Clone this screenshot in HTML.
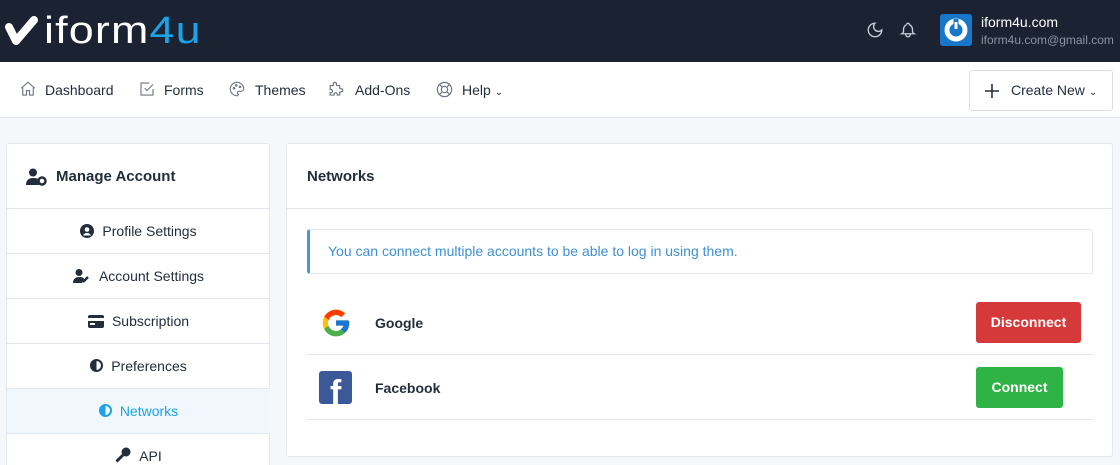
<!DOCTYPE html><html><head><style>
*{box-sizing:border-box;margin:0;padding:0}
html,body{width:1120px;height:465px;overflow:hidden}
body{background:#f5f7fb;font-family:"Liberation Sans",sans-serif;position:relative;color:#232e3c}
.top{position:absolute;left:0;top:0;width:1120px;height:62px;background:#1b2333}
.nav{position:absolute;left:0;top:62px;width:1120px;height:56px;background:#fff;border-bottom:1px solid #e3e6ec}
.ni{position:absolute;top:0;line-height:56px;font-size:14px;color:#232e3c}
.ni svg{position:absolute;left:0;top:18px}
.card{position:absolute;background:#fff;border:1px solid #e3e6ec;border-radius:3px}
.item{position:absolute;left:0;width:263px;height:45px;border-top:1px solid #e3e6ec;font-size:14px;text-align:center;line-height:44px}
.ic{display:inline-block;vertical-align:-2px;margin-right:8px}
.btn{position:absolute;color:#fff;font-size:14px;font-weight:bold;text-align:center;line-height:40px;border-radius:3px}
</style></head><body>
<div class="top">
<svg style="position:absolute;left:4px;top:14px" width="36" height="32"><path d="M5 13 L12 27 L30 6" stroke="#fff" stroke-width="8" fill="none" stroke-linecap="round" stroke-linejoin="round"/></svg>
<div style="position:absolute;left:44px;top:9px;font-size:38px;color:#fff;letter-spacing:1px;line-height:44px;transform:scaleX(1.18);transform-origin:left">iform<span style="color:#1aa3e8">4u</span></div>
<svg style="position:absolute;left:866px;top:21px" width="18" height="18" viewBox="0 0 24 24"><path d="M12 3a6 6 0 0 0 9 9 9 9 0 1 1-9-9z" stroke="#c9ced6" stroke-width="1.8" fill="none"/></svg>
<svg style="position:absolute;left:899px;top:21px" width="18" height="18" viewBox="0 0 24 24"><path d="M10 5a2 2 0 0 1 4 0a7 7 0 0 1 4 6v3a4 4 0 0 0 2 3H4a4 4 0 0 0 2-3v-3a7 7 0 0 1 4-6M9 17v1a3 3 0 0 0 6 0v-1" stroke="#c9ced6" stroke-width="1.8" fill="none"/></svg>
<div style="position:absolute;left:940px;top:14px;width:32px;height:32px;background:#1877c9;border-radius:3px"><svg width="32" height="32"><circle cx="16" cy="16" r="9" stroke="#fff" stroke-width="5" fill="none"/><path d="M16 5v10" stroke="#1877c9" stroke-width="5"/><path d="M16 8v7" stroke="#fff" stroke-width="3"/></svg></div>
<div style="position:absolute;left:981px;top:14px;font-size:14px;color:#fff">iform4u.com</div>
<div style="position:absolute;left:981px;top:33px;font-size:12px;color:#8a94a6">iform4u.com@gmail.com</div>
</div>
<div class="nav">
<div class="ni" style="left:19px;padding-left:26px"><svg width="18" height="18" viewBox="0 0 24 24" fill="none" stroke="#6e7582" stroke-width="1.5"><path d="M3 11l9-8 9 8M5 10v10h5v-6h4v6h5V10"/></svg>Dashboard</div>
<div class="ni" style="left:138px;padding-left:26px"><svg width="18" height="18" viewBox="0 0 24 24" fill="none" stroke="#6e7582" stroke-width="1.5"><path d="M9 11l3 3 8-8M20 12v8H4V4h11"/></svg>Forms</div>
<div class="ni" style="left:228px;padding-left:27px"><svg width="18" height="18" viewBox="0 0 24 24" fill="none" stroke="#6e7582" stroke-width="1.5"><path d="M12 21a9 9 0 1 1 9-9c0 2-2 3-4 3h-2a2 2 0 0 0-1 4c0 1-1 2-2 2z"/><circle cx="8" cy="11" r="1"/><circle cx="11" cy="7" r="1"/><circle cx="16" cy="9" r="1"/></svg>Themes</div>
<div class="ni" style="left:327px;padding-left:28px"><svg width="19" height="19" viewBox="0 0 24 24" fill="none" stroke="#6e7582" stroke-width="1.5"><path d="M4 7h3a1 1 0 0 0 1-1V5a2 2 0 0 1 4 0v1a1 1 0 0 0 1 1h3v3a1 1 0 0 0 1 1h1a2 2 0 0 1 0 4h-1a1 1 0 0 0-1 1v3h-3v-1a2 2 0 0 0-4 0v1H4v-3h1a2 2 0 0 0 0-4H4z"/></svg>Add-Ons</div>
<div class="ni" style="left:435px;padding-left:27px"><svg width="19" height="19" viewBox="0 0 24 24" fill="none" stroke="#6e7582" stroke-width="1.5"><circle cx="12" cy="12" r="9"/><circle cx="12" cy="12" r="4"/><path d="M15 15l3.5 3.5M9 15l-3.5 3.5M15 9l3.5-3.5M9 9L5.5 5.5"/></svg>Help <span style="font-size:10px">⌄</span></div>
<div style="position:absolute;left:969px;top:8px;width:144px;height:41px;border:1px solid #dadfe5;border-radius:3px;font-size:14px;line-height:39px;padding-left:41px">Create New <span style="font-size:10px">⌄</span><svg style="position:absolute;left:15px;top:13px" width="14" height="14"><path d="M7 0v14M0 7h14" stroke="#232e3c" stroke-width="1.6"/></svg></div>
</div>
<div class="card" style="left:6px;top:143px;width:264px;height:340px">
<div style="position:absolute;left:19px;top:24px;font-size:15px;font-weight:bold;padding-left:30px">
<svg style="position:absolute;left:0;top:0" width="22" height="18" viewBox="0 0 22 18"><circle cx="7" cy="4.5" r="4" fill="#232e3c"/><path d="M0 17c0-5 3-7 7-7s5 1 6 2v5z" fill="#232e3c"/><circle cx="16" cy="13" r="3.5" fill="#fff" stroke="#232e3c" stroke-width="2.5"/></svg>Manage Account</div>
<div class="item" style="top:64px"><svg class="ic" width="14" height="14" viewBox="0 0 14 14"><circle cx="7" cy="7" r="7" fill="#232e3c"/><circle cx="7" cy="5.5" r="2.3" fill="#fff"/><path d="M3 11.5c1-2 2.5-2.5 4-2.5s3 .5 4 2.5" fill="#fff"/></svg>Profile Settings</div>
<div class="item" style="top:109px"><svg class="ic" width="18" height="14" viewBox="0 0 18 14"><circle cx="6" cy="3.5" r="3.5" fill="#232e3c"/><path d="M0 14c0-4 2.5-6 6-6s5 1 5 2l-2 4z" fill="#232e3c"/><path d="M10 13l5-5" stroke="#232e3c" stroke-width="2.5"/></svg>Account Settings</div>
<div class="item" style="top:154px"><svg class="ic" width="16" height="13" viewBox="0 0 16 13"><rect width="16" height="13" rx="2" fill="#232e3c"/><rect y="3" width="16" height="3" fill="#fff"/><rect x="2" y="8" width="5" height="2" fill="#fff"/></svg>Subscription</div>
<div class="item" style="top:199px"><span style="display:inline-block;width:13px;height:13px;border-radius:50%;border:2px solid #232e3c;background:linear-gradient(90deg,#232e3c 50%,#fff 50%);vertical-align:-1px;margin-right:8px"></span>Preferences</div>
<div class="item" style="top:244px;background:#f0f8fd;color:#1aa3e8"><span style="display:inline-block;width:13px;height:13px;border-radius:50%;border:2px solid #1aa3e8;background:linear-gradient(90deg,#1aa3e8 50%,#fff 50%);vertical-align:-1px;margin-right:8px"></span>Networks</div>
<div class="item" style="top:289px"><svg class="ic" width="16" height="16" viewBox="0 0 16 16"><circle cx="11" cy="5" r="4.5" fill="#232e3c"/><path d="M8 8L1.5 14.5" stroke="#232e3c" stroke-width="3"/></svg>API</div>
</div>
<div class="card" style="left:286px;top:143px;width:827px;height:314px">
<div style="position:absolute;left:20px;top:24px;font-size:15px;font-weight:bold">Networks</div>
<div style="position:absolute;left:0;top:64px;width:825px;border-top:1px solid #e3e6ec"></div>
<div style="position:absolute;left:20px;top:85px;width:786px;height:45px;border:1px solid #e3e6ec;border-left:3px solid #4299e1;border-radius:3px;font-size:14px;color:#3e8fd4;line-height:43px;padding-left:18px">You can connect multiple accounts to be able to log in using them.</div>
<svg style="position:absolute;left:33px;top:163px" width="32" height="32" viewBox="0 0 48 48"><path d="M43.6 20.5H42V20H24v8h11.3A12 12 0 1 1 32 15.1l5.7-5.7A20 20 0 1 0 44 24c0-1.2-.1-2.3-.4-3.5z" fill="#FFC107"/><path d="M6.3 14.7l6.6 4.8A12 12 0 0 1 32 15.1l5.7-5.7A20 20 0 0 0 6.3 14.7z" fill="#FF3D00"/><path d="M24 44a20 20 0 0 0 13.4-5.2l-6.2-5.2A12 12 0 0 1 12.7 28l-6.5 5A20 20 0 0 0 24 44z" fill="#4CAF50"/><path d="M43.6 20.5H42V20H24v8h11.3a12 12 0 0 1-4.1 5.6l6.2 5.2C37 39.2 44 34 44 24c0-1.2-.1-2.3-.4-3.5z" fill="#1976D2"/></svg>
<div style="position:absolute;left:88px;top:171px;font-size:14px;font-weight:bold">Google</div>
<div class="btn" style="left:689px;top:158px;width:105px;height:41px;background:#d63939">Disconnect</div>
<div style="position:absolute;left:20px;top:210px;width:786px;border-top:1px solid #e3e6ec"></div>
<div style="position:absolute;left:32px;top:227px;width:33px;height:33px;background:#3b5998;border-radius:3px;overflow:hidden"><span style="position:absolute;left:11px;top:3px;color:#fff;font-size:34px;font-weight:bold;font-family:'Liberation Sans'">f</span></div>
<div style="position:absolute;left:88px;top:236px;font-size:14px;font-weight:bold">Facebook</div>
<div class="btn" style="left:689px;top:223px;width:87px;height:41px;background:#2fb344">Connect</div>
<div style="position:absolute;left:20px;top:275px;width:786px;border-top:1px solid #e3e6ec"></div>
</div>
</body></html>
